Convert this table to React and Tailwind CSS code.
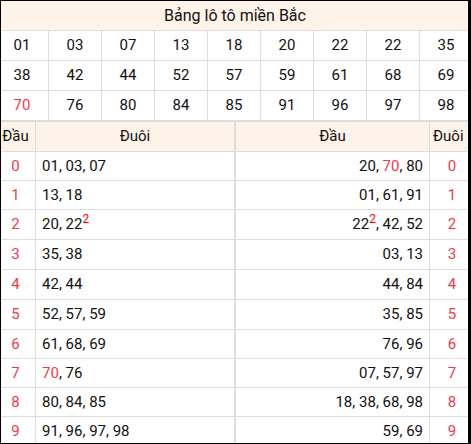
const loto = [
  ["01", "03", "07", "13", "18", "20", "22", "22", "35"],
  ["38", "42", "44", "52", "57", "59", "61", "68", "69"],
  ["70", "76", "80", "84", "85", "91", "96", "97", "98"],
];

// hai so dac biet to do
const hot = ["70"];

const dauRows = [
  ["01", "03", "07"],
  ["13", "18"],
  ["20", "22²"],
  ["35", "38"],
  ["42", "44"],
  ["52", "57", "59"],
  ["61", "68", "69"],
  ["70", "76"],
  ["80", "84", "85"],
  ["91", "96", "97", "98"],
];

const duoiRows = [
  ["20", "70", "80"],
  ["01", "61", "91"],
  ["22²", "42", "52"],
  ["03", "13"],
  ["44", "84"],
  ["35", "85"],
  ["76", "96"],
  ["07", "57", "97"],
  ["18", "38", "68", "98"],
  ["59", "69"],
];

const rowH = [
  "h-[29px]",
  "h-[29px]",
  "h-[30px]",
  "h-[30px]",
  "h-[30px]",
  "h-[30px]",
  "h-[29px]",
  "h-[29px]",
  "h-[29px]",
  "h-[29px]",
];

function Num({ value }) {
  if (value.endsWith("²")) {
    return (
      <>
        {value.slice(0, -1)}
        <sup className="text-[12px] text-[#ff0000] -top-[6px]">2</sup>
      </>
    );
  }
  return hot.includes(value) ? (
    <span className="text-[#f03a4c]">{value}</span>
  ) : (
    value
  );
}

function NumList({ items }) {
  return (
    <span className="whitespace-pre">
      {items.map((n, i) => (
        <span key={i}>
          <Num value={n} />
          {i < items.length - 1 ? ", " : ""}
        </span>
      ))}
    </span>
  );
}

export default function App() {
  return (
    <div className="w-[471px] h-[444px] bg-white">
      <div
        className="w-[471px] h-[444px] border-l border-t border-b border-r-[3px] border-black overflow-hidden text-[15px] text-[#111]"
        style={{ fontFamily: "Roboto, 'Liberation Sans', sans-serif" }}
      >
        <div className="w-[478px] -ml-[5px]">
          {/* BANG LO TO */}
          <div className="h-[30px] bg-[#fef3e8] border-b border-[#dddddd] flex items-center justify-center text-[16px]">
            Bảng lô tô miền Bắc
          </div>

          {loto.map((row, r) => (
            <div key={r} className="flex h-[30px] border-b border-[#dddddd]">
              {row.map((n, c) => (
                <div
                  key={c}
                  className="w-[53px] border-r border-[#dddddd] flex items-center justify-center"
                >
                  <Num value={n} />
                </div>
              ))}
            </div>
          ))}

          {/* DAU DUOI */}
          <div className="border-t border-[#dddddd]">
            <div className="flex h-[30px] bg-[#fef3e8] border-b border-[#dddddd]">
              <div className="w-[40px] border-r border-[#dddddd] flex items-center justify-center">
                Đầu
              </div>
              <div className="w-[200px] border-r-2 border-[#dddddd] flex items-center justify-center">
                Đuôi
              </div>
              <div className="w-[194px] border-r border-[#dddddd] flex items-center justify-center">
                Đầu
              </div>
              <div className="w-[44px] flex items-center pl-[3px]">Đuôi</div>
            </div>

            {dauRows.map((items, i) => (
              <div
                key={i}
                className={"flex border-b border-[#dddddd] " + rowH[i]}
              >
                <div className="w-[40px] border-r border-[#dddddd] flex items-center justify-center text-[#f03a4c]">
                  {i}
                </div>
                <div className="w-[200px] border-r-2 border-[#dddddd] flex items-center pl-[6px]">
                  <NumList items={items} />
                </div>
                <div className="w-[194px] border-r border-[#dddddd] flex items-center justify-end pr-[6px]">
                  <NumList items={duoiRows[i]} />
                </div>
                <div className="w-[44px] flex items-center justify-center text-[#f03a4c]">
                  {i}
                </div>
              </div>
            ))}
          </div>
        </div>
      </div>
    </div>
  );
}
